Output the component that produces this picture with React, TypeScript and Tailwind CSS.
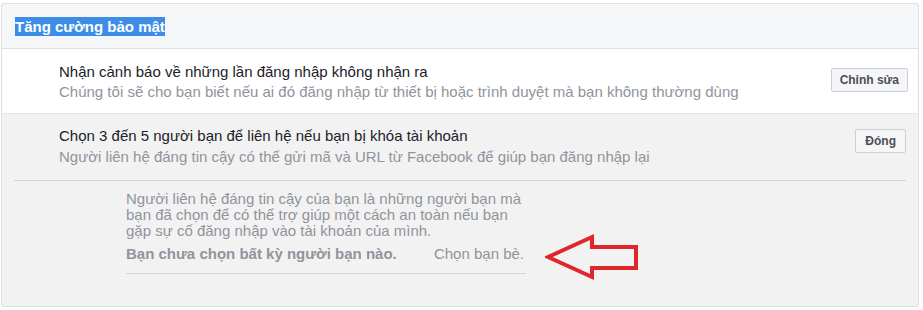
import React from "react";

export default function App() {
  return (
    <div
      className="w-[923px] h-[310px] bg-white pt-[3px] pl-[1px] text-[15px]"
      style={{ fontFamily: '"Liberation Sans", Arial, sans-serif' }}
    >
      <div className="relative w-[918px] h-[304px] border border-[#dddfe2] rounded-[2px] flex flex-col overflow-hidden">
        <div className="h-[45px] shrink-0 bg-[#f5f6f7] border-b border-[#dddfe2] pl-[13px] flex items-center">
          <span className="bg-[#3b8de8] text-white font-bold text-[15px] leading-[19px] mt-[1px]">
            Tăng cường bảo mật
          </span>
        </div>
        <div className="h-[65px] shrink-0 bg-white border-b border-[#e5e5e5] pl-[57px] pr-[10px] flex items-center justify-between">
          <div className="flex flex-col leading-[20px] pt-[2px]">
            <span className="text-[#1d2129]">Nhận cảnh báo về những lần đăng nhập không nhận ra</span>
            <span className="text-[#90949c]">Chúng tôi sẽ cho bạn biết nếu ai đó đăng nhập từ thiết bị hoặc trình duyệt mà bạn không thường dùng</span>
          </div>
          <button className="h-[24px] px-[8px] bg-[#f5f6f7] border border-[#ccd0d5] rounded-[2px] text-[12px] font-bold text-[#4b4f56] mb-[2px]">
            Chỉnh sửa
          </button>
        </div>
        <div className="flex-1 bg-[#f2f2f2] px-[12px]">
          <div className="h-[67px] border-b border-[#d3d3d3] pl-[45px] flex items-center justify-between">
            <div className="flex flex-col leading-[21px] pb-[2px]">
              <span className="text-[#1d2129]">Chọn 3 đến 5 người bạn để liên hệ nếu bạn bị khóa tài khoản</span>
              <span className="text-[#90949c]">Người liên hệ đáng tin cậy có thể gửi mã và URL từ Facebook để giúp bạn đăng nhập lại</span>
            </div>
            <button className="h-[24px] px-[9px] bg-[#f5f6f7] border border-[#ccd0d5] rounded-[2px] text-[12px] font-bold text-[#4b4f56] mb-[12px]">
              Đóng
            </button>
          </div>
          <div className="ml-[112px] w-[400px] pt-[10px] border-b border-[#d3d3d3] pb-[10px]">
            <p className="text-[#90949c] leading-[16px]">
              Người liên hệ đáng tin cậy của bạn là những người bạn mà bạn đã chọn để có thể trợ giúp một cách an toàn nếu bạn gặp sự cố đăng nhập vào tài khoản của mình.
            </p>
            <div className="flex justify-between mt-[6px] leading-[18px]">
              <span className="font-bold text-[#90949c]">Bạn chưa chọn bất kỳ người bạn nào.</span>
              <span className="text-[#90949c] pr-[2px]">Chọn bạn bè.</span>
            </div>
          </div>
        </div>
        <svg
          className="absolute left-[543px] top-[227px]"
          width="96"
          height="50"
          viewBox="543 227 96 50"
        >
          <polygon
            points="546,253 590,233 590,243 634,243 634,264 590,264 590,273"
            fill="none"
            stroke="#e0252b"
            strokeWidth="4"
            strokeLinejoin="miter"
          />
        </svg>
      </div>
    </div>
  );
}
